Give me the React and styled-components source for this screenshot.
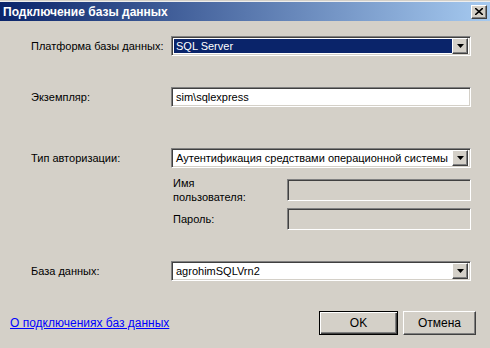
import React from 'react';
import styled, { createGlobalStyle } from 'styled-components';

const GlobalStyle = createGlobalStyle`
  html, body {
    margin: 0;
    padding: 0;
    background: #d4d0c8;
  }
  body {
    font-family: "Liberation Sans", Arial, sans-serif;
    font-size: 11px;
    color: #000;
  }
`;

const Window = styled.div`
  width: 490px;
  height: 348px;
  background: #d4d0c8;
  display: flex;
  flex-direction: column;
  overflow: hidden;
`;

const TitleBar = styled.div`
  height: 19px;
  margin-top: 1px;
  padding: 0 3px 0 3px;
  display: flex;
  align-items: center;
  justify-content: space-between;
  background: linear-gradient(to right, #0a246a, #a6caf0);
  border-top: 1px solid #eeeeee;
`;

const Title = styled.span`
  color: #fff;
  font-weight: bold;
  font-size: 12px;
`;

const Raised = `
  background: #d4d0c8;
  border-top: 1px solid #fff;
  border-left: 1px solid #fff;
  border-right: 1px solid #404040;
  border-bottom: 1px solid #404040;
  box-shadow: inset -1px -1px 0 #808080;
`;

const CloseButton = styled.div`
  ${Raised}
  width: 14px;
  height: 12px;
  display: flex;
  align-items: center;
  justify-content: center;
`;

const Body = styled.div`
  flex: 1;
  display: flex;
  flex-direction: column;
  padding: 15px 19px 0 31px;
`;

const Row = styled.div`
  display: flex;
  align-items: center;
  height: ${(p) => p.$h || 20}px;
  margin-top: ${(p) => p.$top || 0}px;
`;

const Label = styled.div`
  width: 140px;
  flex: none;
  white-space: nowrap;
`;

const SubRow = styled.div`
  display: flex;
  align-items: center;
  margin-left: 142px;
  margin-top: ${(p) => p.$top || 0}px;
`;

const SubLabel = styled.div`
  width: 114px;
  flex: none;
  line-height: 14px;
`;

const Sunken = `
  box-sizing: border-box;
  border-top: 1px solid #808080;
  border-left: 1px solid #808080;
  border-right: 1px solid #fff;
  border-bottom: 1px solid #fff;
  box-shadow: inset 1px 1px 0 #404040, inset -1px -1px 0 #d4d0c8;
`;

const Field = styled.div`
  ${Sunken}
  width: ${(p) => p.$w || 300}px;
  height: ${(p) => p.$h || 20}px;
  background: ${(p) => (p.$disabled ? '#d4d0c8' : '#fff')};
  display: flex;
  align-items: center;
  padding: 2px;
`;

const FieldText = styled.span`
  flex: 1;
  height: 100%;
  display: flex;
  align-items: center;
  padding-left: 2px;
  white-space: nowrap;
  overflow: hidden;
  background: ${(p) => (p.$selected ? '#0a246a' : 'transparent')};
  color: ${(p) => (p.$selected ? '#fff' : '#000')};
`;

const DropButton = styled.div`
  ${Raised}
  box-sizing: border-box;
  width: 16px;
  height: 16px;
  flex: none;
  display: flex;
  align-items: center;
  justify-content: center;
`;

const Footer = styled.div`
  display: flex;
  align-items: center;
  margin-top: 30px;
  margin-left: -21px;
  margin-right: -5px;
`;

const Link = styled.a`
  color: #0000ff;
  font-size: 12px;
  text-decoration: underline;
  flex: 1;
  cursor: pointer;
`;

const Button = styled.div`
  box-sizing: border-box;
  width: ${(p) => p.$w}px;
  height: 24px;
  margin-left: ${(p) => p.$ml || 0}px;
  display: flex;
  align-items: center;
  justify-content: center;
  font-size: 12px;
  background: #d4d0c8;
  border: 1px solid ${(p) => (p.$default ? '#000' : '#404040')};
  border-top-color: ${(p) => (p.$default ? '#000' : '#fff')};
  border-left-color: ${(p) => (p.$default ? '#000' : '#fff')};
  box-shadow: ${(p) => (p.$default
    ? 'inset 1px 1px 0 #fff, inset -1px -1px 0 #404040, inset -2px -2px 0 #808080'
    : 'inset -1px -1px 0 #808080')};
`;

const Arrow = () => (
  <svg width="7" height="4" viewBox="0 0 7 4">
    <path d="M0 0h7L3.5 4z" fill="#000" />
  </svg>
);

const CloseIcon = () => (
  <svg width="8" height="7" viewBox="0 0 8 7">
    <path d="M0 0L8 7M8 0L0 7" stroke="#000" strokeWidth="1.6" />
  </svg>
);

const Select = ({ value, selected }) => (
  <Field>
    <FieldText $selected={selected}>{value}</FieldText>
    <DropButton>
      <Arrow />
    </DropButton>
  </Field>
);

export default function App() {
  return (
    <Window>
      <GlobalStyle />
      <TitleBar>
        <Title>Подключение базы данных</Title>
        <CloseButton>
          <CloseIcon />
        </CloseButton>
      </TitleBar>
      <Body>
        <Row>
          <Label>Платформа базы данных:</Label>
          <Select value="SQL Server" selected />
        </Row>
        <Row $top={31}>
          <Label>Экземпляр:</Label>
          <Field>
            <FieldText>sim\sqlexpress</FieldText>
          </Field>
        </Row>
        <Row $top={41}>
          <Label>Тип авторизации:</Label>
          <Select value="Аутентификация средствами операционной системы" />
        </Row>
        <SubRow $top={8}>
          <SubLabel>
            Имя
            <br />
            пользователя:
          </SubLabel>
          <Field $w={184} $h={22} $disabled />
        </SubRow>
        <SubRow $top={4}>
          <SubLabel>Пароль:</SubLabel>
          <Field $w={184} $h={22} $disabled />
        </SubRow>
        <Row $top={31}>
          <Label>База данных:</Label>
          <Select value="agrohimSQLVrn2" />
        </Row>
        <Footer>
          <Link>О подключениях баз данных</Link>
          <Button $w={79} $default>OK</Button>
          <Button $w={73} $ml={5}>Отмена</Button>
        </Footer>
      </Body>
    </Window>
  );
}
